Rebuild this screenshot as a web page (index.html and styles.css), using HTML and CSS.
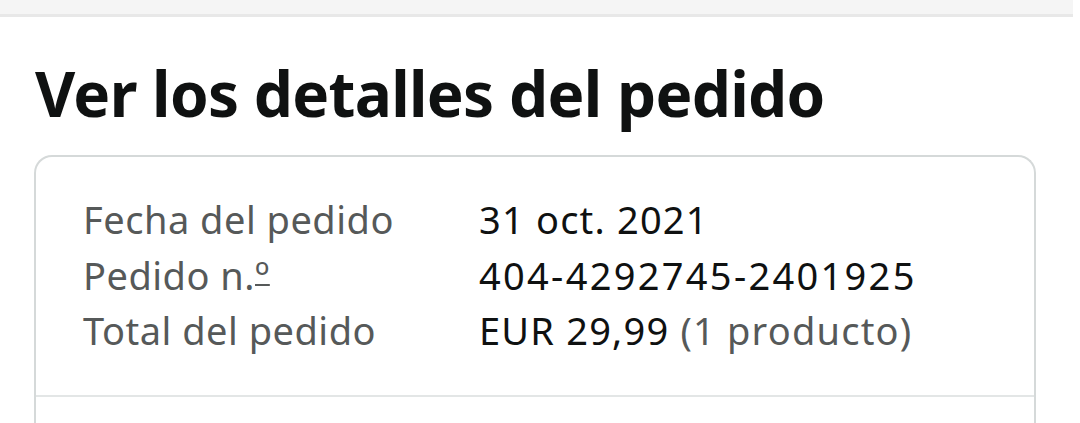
FILE: index.html
```html
<!DOCTYPE html>
<html lang="es">
<head>
    <meta charset="UTF-8">
    <meta name="viewport" content="width=device-width, initial-scale=1.0">
    <title>Ver los detalles del pedido</title>
    <link rel="stylesheet" href="styles.css">
</head>
<body>
    <div class="top-bar"></div>
    <main class="page">
        <h1 class="title">Ver los detalles del pedido</h1>
        <div class="order-card">
            <div class="order-info">
                <div class="label">Fecha del pedido</div>
                <div class="value">31 oct. 2021</div>
                <div class="label">Pedido n.<span class="ordinal">º</span></div>
                <div class="value order-id">404-4292745-2401925</div>
                <div class="label">Total del pedido</div>
                <div class="value">EUR 29,99 <span class="muted">(1 producto)</span></div>
            </div>
            <div class="order-next"></div>
        </div>
    </main>
</body>
</html>
```

FILE: styles.css
```css
body {
    margin: 0;
    font-family: "Noto Sans", "Open Sans", sans-serif;
    background-color: #fff;
    color: #0f1111;
    height: 423px;
    overflow: hidden;
    display: flex;
    flex-direction: column;
}
.top-bar {
    width: 1073px;
    height: 14px;
    background: #f5f5f5;
    border-bottom: 3px solid #e8e8e8;
}
.page {
    flex: 1;
    display: flex;
    flex-direction: column;
    padding: 0 44px 0 34px;
}
.title {
    margin: 0;
    padding: 34px 0 0 1px;
    font-size: 62px;
    font-weight: bold;
    line-height: 84px;
    letter-spacing: -0.7px;
    color: #0f1111;
}
.order-card {
    flex: 1;
    margin-top: 20px;
    border: 2px solid #d5d9d9;
    border-bottom: 0;
    border-radius: 18px 18px 0 0;
}
.order-info {
    display: grid;
    grid-template-columns: 396px auto;
    padding: 35px 0 36px 47px;
    font-size: 38px;
    line-height: 55.5px;
}
.label {
    color: #565959;
    letter-spacing: 0.5px;
}
.ordinal {
    text-decoration: underline;
    text-decoration-thickness: 2px;
    text-underline-offset: -6px;
}
.value {
    color: #0f1111;
    letter-spacing: 1.2px;
}
.order-id {
    letter-spacing: 2.3px;
}
.muted {
    color: #565959;
}
.order-next {
    border-top: 2px solid #e3e6e6;
}
```
